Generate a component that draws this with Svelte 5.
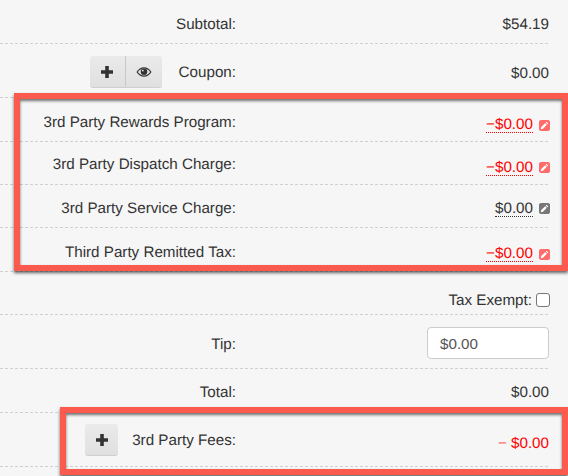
<script>
  let rows = [
    { label: 'Subtotal:', value: '$54.19', h: 44, lp: 4, vp: 4 },
    { label: 'Coupon:', value: '$0.00', h: 54, lp: 2, vp: 4, btns: true },
    { label: '3rd Party Rewards Program:', value: '−$0.00', h: 44, lp: 4, vp: 10, edit: 'red' },
    { label: '3rd Party Dispatch Charge:', value: '−$0.00', h: 43, lp: 2, vp: 8, edit: 'red' },
    { label: '3rd Party Service Charge:', value: '$0.00', h: 43, lp: 4, vp: 4, edit: 'gray' },
    { label: 'Third Party Remitted Tax:', value: '−$0.00', h: 44, lp: 4, vp: 8, edit: 'red' },
    { label: '', value: 'Tax Exempt:', h: 43, lp: 0, vp: 13, check: true },
    { label: 'Tip:', h: 54, lp: 4, vp: 2, input: true },
    { label: 'Total:', value: '$0.00', h: 44, lp: 2, vp: 2 },
    { label: '3rd Party Fees:', value: '$0.00', h: 54, lp: 0, vp: 7, fees: true }
  ];
</script>

<div class="page">
  {#each rows as row}
    <div class="row" style="height:{row.h}px">
      <div class="left" style="padding-top:{row.lp}px">
        {#if row.btns}
          <div class="group">
            <button class="btn" aria-label="add">
              <svg width="14" height="14" viewBox="0 0 14 14"><path d="M5.2 1h3.6v4.2H13v3.6H8.8V13H5.2V8.8H1V5.2h4.2z" fill="#333" /></svg>
            </button>
            <button class="btn" aria-label="view">
              <svg width="16" height="12" viewBox="0 0 16 12">
                <path d="M0.5 6C2.3 2.8 5 1.2 8 1.2S13.7 2.8 15.5 6C13.7 9.200 11 10.800 8 10.800S2.300 9.200 0.500 6z" fill="#333" />
                <path d="M1.900 6C3.400 3.800 5.400 2.500 8 2.500S12.600 3.800 14.100 6C12.600 8.200 10.600 9.500 8 9.500S3.400 8.200 1.900 6z" fill="#e6e6e6" />
                <circle cx="8" cy="5.800" r="3.300" fill="#333" />
                <circle cx="6.800" cy="4.600" r="0.900" fill="#e6e6e6" />
              </svg>
            </button>
          </div>
        {/if}
        {#if row.fees}
          <button class="btn single" aria-label="add fee">
            <svg width="14" height="14" viewBox="0 0 14 14"><path d="M5.2 1h3.6v4.2H13v3.6H8.8V13H5.2V8.8H1V5.2h4.2z" fill="#333" /></svg>
          </button>
        {/if}
        <span class="label">{row.label}</span>
      </div>
      <div class="right" style="padding-top:{row.vp}px">
        {#if row.input}
          <input class="tip" value="$0.00" />
        {:else if row.check}
          <span>{row.value}</span><span class="box"></span>
        {:else if row.fees}
          <span class="red"><span class="dash">−</span> {row.value}</span>
        {:else if row.edit}
          <span class="amount" class:red={row.edit === 'red'}>{row.value}</span>
          <span class="pencil {row.edit}">
            <svg width="9" height="9" viewBox="0 0 10 10"><path d="M7.300 0.800l1.900 1.900-1 1-1.900-1.900zM5.700 2.400l1.900 1.900-4.300 4.300-2.500 0.600 0.600-2.500z" fill="#fff" /></svg>
          </span>
        {:else}
          <span>{row.value}</span>
        {/if}
      </div>
    </div>
  {/each}

  <div class="mark first"></div>
  <div class="mark second"></div>
</div>

<style>
  :global(body) {
    margin: 0;
    background: #f6f6f6;
  }

  .page {
    position: relative;
    width: 568px;
    height: 476px;
    overflow: hidden;
    background: #f6f6f6;
    font-family: "Liberation Sans", Arial, sans-serif;
    font-size: 15.2px;
    text-rendering: geometricPrecision;
    color: #333;
  }

  .row {
    box-sizing: border-box;
    width: 549px;
    display: flex;
    align-items: center;
    background: repeating-linear-gradient(90deg, #d0d0d0 0 3px, transparent 3px 5px) left bottom / 100% 1px no-repeat;
  }

  .left {
    width: 236px;
    flex: none;
    display: flex;
    justify-content: flex-end;
    align-items: center;
  }

  .right {
    flex: 1;
    display: flex;
    justify-content: flex-end;
    align-items: center;
  }

  .group {
    display: flex;
    margin-right: 17px;
  }

  .btn {
    width: 36px;
    height: 32px;
    padding: 0;
    display: flex;
    align-items: center;
    justify-content: center;
    background: linear-gradient(#eaeaea, #e0e0e0);
    border: none;
    border-bottom: 1px solid #cfcfcf;
    border-radius: 3px 0 0 3px;
    border-right: 1px solid #c8c8c8;
  }

  .btn + .btn {
    border-right: none;
    border-radius: 0 3px 3px 0;
  }

  .single {
    width: 33px;
    margin-right: 14px;
    border: none;
    border-bottom: 1px solid #cfcfcf;
    border-radius: 3px;
  }

  .red {
    color: #f00;
  }

  .dash {
    color: #ff5a5a;
  }

  .amount {
    border-bottom: 1px dotted currentColor;
    line-height: 15px;
  }

  .pencil {
    width: 11px;
    height: 11px;
    margin-left: 6px;
    margin-right: -1px;
    border-radius: 2px;
    display: flex;
    align-items: center;
    justify-content: center;
  }

  .pencil.red {
    background: #ff6b6b;
  }

  .pencil.gray {
    background: #777;
  }

  .box {
    box-sizing: border-box;
    width: 14px;
    height: 14px;
    margin-left: 4px;
    margin-right: -1px;
    background: #fff;
    border: 1px solid #777;
    border-radius: 3px;
  }

  .tip {
    box-sizing: border-box;
    width: 122px;
    height: 32px;
    padding: 0 12px;
    background: #fff;
    border: 1px solid #ccc;
    border-radius: 4px;
    font: inherit;
    color: #555;
  }

  .mark {
    position: absolute;
    box-sizing: border-box;
    border: 6px solid #fb5a4e;
    box-shadow: 0 2px 3px rgba(0, 0, 0, 0.6), inset 0 2px 3px rgba(0, 0, 0, 0.55);
    pointer-events: none;
  }

  .first {
    left: 14px;
    top: 93px;
    width: 554px;
    height: 178px;
  }

  .second {
    left: 60px;
    top: 407px;
    width: 508px;
    height: 68px;
  }
</style>
